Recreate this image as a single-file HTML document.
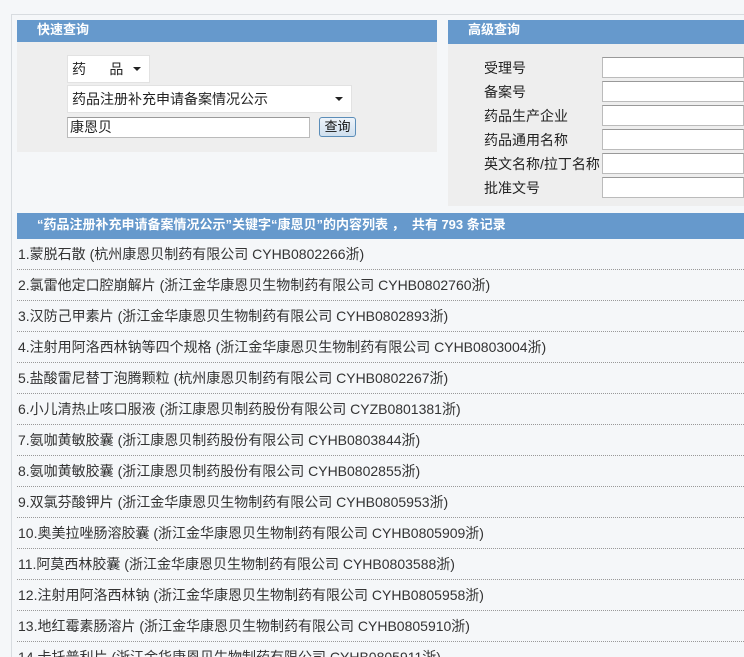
<!DOCTYPE html>
<html><head><meta charset="utf-8"><style>
*{margin:0;padding:0;box-sizing:border-box}
html,body{width:744px;height:657px;overflow:hidden}
body{background:#f5f7f9;font-family:"Liberation Sans","Noto Sans CJK SC",sans-serif;color:#333;position:relative;font-size:13px}
.frame{position:absolute;left:11px;top:14px;width:733px;height:643px;border-left:1px solid #d8dce0;border-top:1px solid #d8dce0}
.bar{position:absolute;background:#6699cc;color:#fff;font-weight:bold;font-size:13px}
.panel{position:absolute;background:#eeeeee}
.sel{position:absolute;background:#fff;border:1px solid #e2e2e2;font-size:14px;padding-left:4px;line-height:26px;color:#222}
.arr{position:absolute;right:8px;top:11px;width:0;height:0;border-left:4px solid transparent;border-right:4px solid transparent;border-top:4px solid #222}
.inp{position:absolute;background:#fff;border:1px solid #bbb;border-top-color:#999}
.lbl{position:absolute;font-size:14px;color:#222;line-height:20px}
.row{position:absolute;left:17px;width:727px;height:31px;border-bottom:1px dotted #999;font-size:14px;line-height:30px;padding-left:1px;color:#333;overflow:hidden;white-space:nowrap}
</style></head><body>
<div class="frame"></div>
<div class="bar" style="left:17px;top:20px;width:420px;height:22px;line-height:20px;padding-left:20px">快速查询</div>
<div class="panel" style="left:17px;top:42px;width:420px;height:110px"></div>
<div class="sel" style="left:67px;top:55px;width:83px;height:28px">药&nbsp;&nbsp;&nbsp;&nbsp;&nbsp;&nbsp;品<span class="arr"></span></div>
<div class="sel" style="left:67px;top:85px;width:285px;height:28px">药品注册补充申请备案情况公示<span class="arr"></span></div>
<div class="inp" style="left:67px;top:117px;width:243px;height:21px;font-size:14px;line-height:19px;padding-left:2px;color:#222">康恩贝</div>
<div style="position:absolute;left:319px;top:117px;width:37px;height:20px;border:1px solid #5b8db8;border-radius:3px;background:linear-gradient(#eef4fa,#cfdfee);font-size:13px;line-height:18px;text-align:center;color:#111">查询</div>

<div class="bar" style="left:448px;top:20px;width:296px;height:24px;line-height:20px;padding-left:20px">高级查询</div>
<div class="panel" style="left:448px;top:44px;width:296px;height:162px"></div>
<div class="lbl" style="left:484px;top:58px">受理号</div>
<div class="lbl" style="left:484px;top:82px">备案号</div>
<div class="lbl" style="left:484px;top:106px">药品生产企业</div>
<div class="lbl" style="left:484px;top:130px">药品通用名称</div>
<div class="lbl" style="left:484px;top:154px">英文名称/拉丁名称</div>
<div class="lbl" style="left:484px;top:178px">批准文号</div>
<div class="inp" style="left:602px;top:57px;width:142px;height:21px"></div>
<div class="inp" style="left:602px;top:81px;width:142px;height:21px"></div>
<div class="inp" style="left:602px;top:105px;width:142px;height:21px"></div>
<div class="inp" style="left:602px;top:129px;width:142px;height:21px"></div>
<div class="inp" style="left:602px;top:153px;width:142px;height:21px"></div>
<div class="inp" style="left:602px;top:177px;width:142px;height:21px"></div>

<div class="bar" style="left:17px;top:213px;width:727px;height:26px;line-height:24px;padding-left:20px">“药品注册补充申请备案情况公示”关键字“康恩贝”的内容列表 ， &nbsp;共有 793 条记录</div>

<div class="row" style="top:239px">1.蒙脱石散 (杭州康恩贝制药有限公司 CYHB0802266浙)</div>
<div class="row" style="top:270px">2.氯雷他定口腔崩解片 (浙江金华康恩贝生物制药有限公司 CYHB0802760浙)</div>
<div class="row" style="top:301px">3.汉防己甲素片 (浙江金华康恩贝生物制药有限公司 CYHB0802893浙)</div>
<div class="row" style="top:332px">4.注射用阿洛西林钠等四个规格 (浙江金华康恩贝生物制药有限公司 CYHB0803004浙)</div>
<div class="row" style="top:363px">5.盐酸雷尼替丁泡腾颗粒 (杭州康恩贝制药有限公司 CYHB0802267浙)</div>
<div class="row" style="top:394px">6.小儿清热止咳口服液 (浙江康恩贝制药股份有限公司 CYZB0801381浙)</div>
<div class="row" style="top:425px">7.氨咖黄敏胶囊 (浙江康恩贝制药股份有限公司 CYHB0803844浙)</div>
<div class="row" style="top:456px">8.氨咖黄敏胶囊 (浙江康恩贝制药股份有限公司 CYHB0802855浙)</div>
<div class="row" style="top:487px">9.双氯芬酸钾片 (浙江金华康恩贝生物制药有限公司 CYHB0805953浙)</div>
<div class="row" style="top:518px">10.奥美拉唑肠溶胶囊 (浙江金华康恩贝生物制药有限公司 CYHB0805909浙)</div>
<div class="row" style="top:549px">11.阿莫西林胶囊 (浙江金华康恩贝生物制药有限公司 CYHB0803588浙)</div>
<div class="row" style="top:580px">12.注射用阿洛西林钠 (浙江金华康恩贝生物制药有限公司 CYHB0805958浙)</div>
<div class="row" style="top:611px">13.地红霉素肠溶片 (浙江金华康恩贝生物制药有限公司 CYHB0805910浙)</div>
<div class="row" style="top:642px;height:15px;border:none">14.卡托普利片 (浙江金华康恩贝生物制药有限公司 CYHB0805911浙)</div>
</body></html>
